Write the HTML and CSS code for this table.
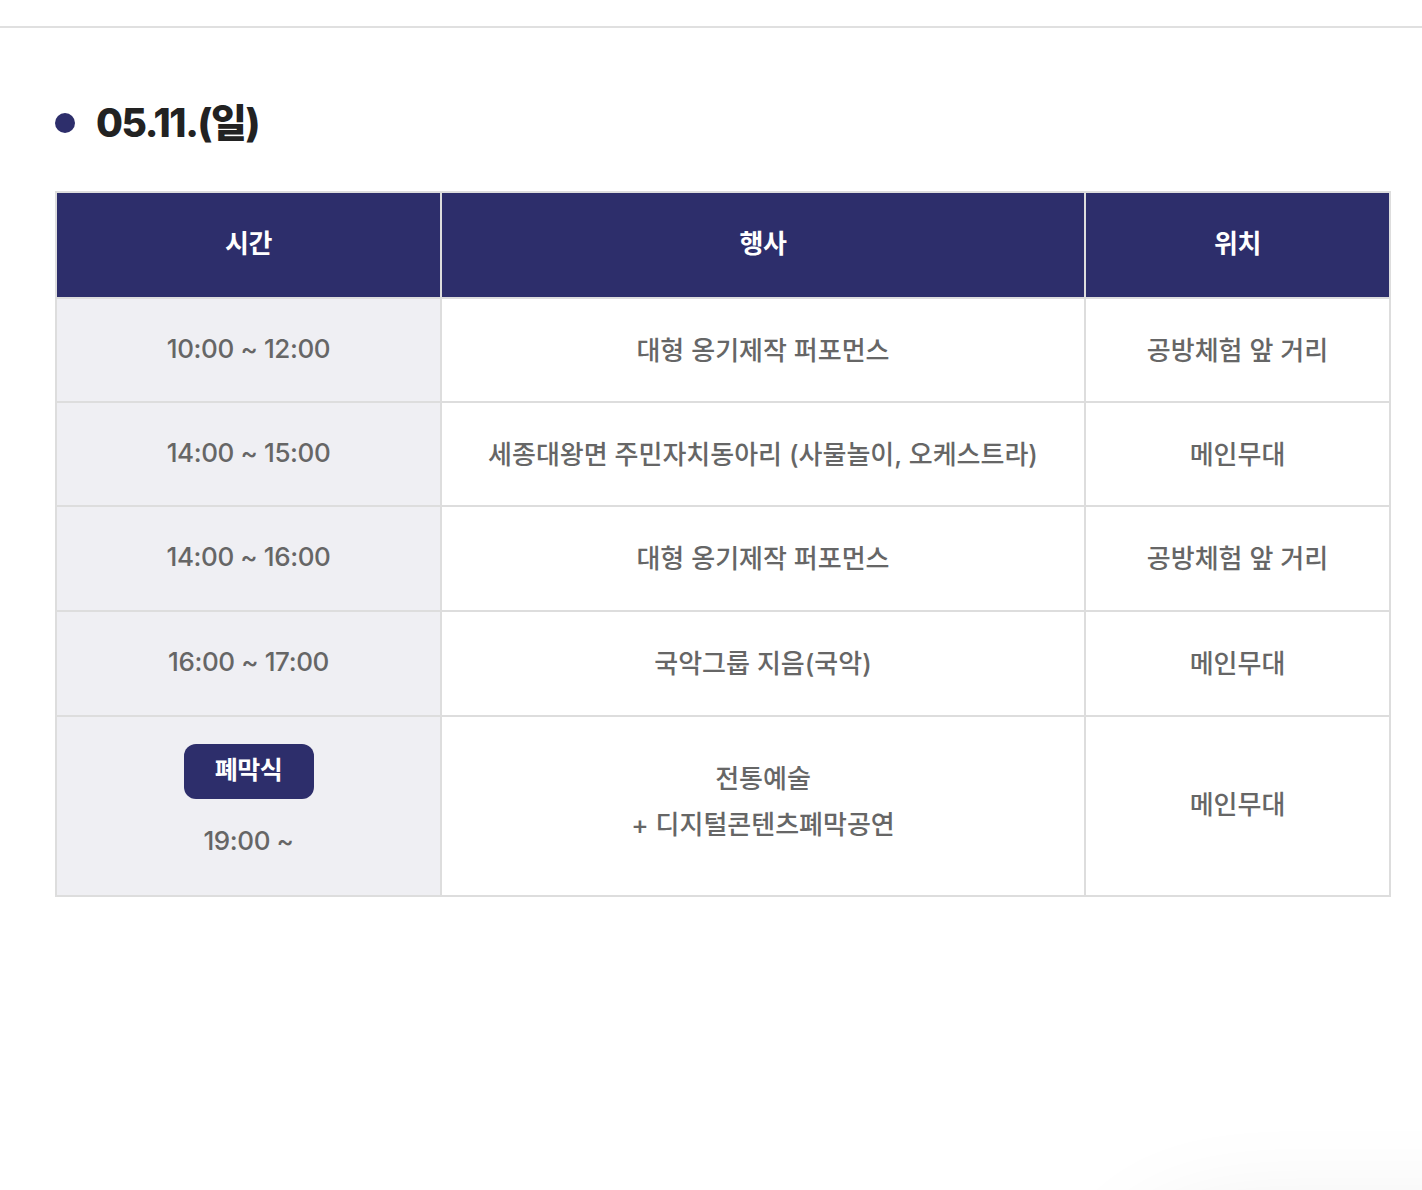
FILE: index.html
```html
<!DOCTYPE html>
<html lang="ko">
<head>
<meta charset="utf-8">
<title>05.11.(일)</title>
<link rel="stylesheet" href="styles.css">
</head>
<body>
<div class="topline"></div>
<main class="wrap">
  <h2 class="day"><span class="dot"></span><span class="daytext">05.11.(일)</span></h2>
  <table class="sched">
    <colgroup>
      <col class="c1"><col class="c2"><col class="c3">
    </colgroup>
    <thead>
      <tr><th>시간</th><th>행사</th><th>위치</th></tr>
    </thead>
    <tbody>
      <tr><td class="time">10:00 ~ 12:00</td><td>대형 옹기제작 퍼포먼스</td><td>공방체험 앞 거리</td></tr>
      <tr><td class="time">14:00 ~ 15:00</td><td>세종대왕면 주민자치동아리 (사물놀이, 오케스트라)</td><td>메인무대</td></tr>
      <tr class="tall"><td class="time">14:00 ~ 16:00</td><td>대형 옹기제작 퍼포먼스</td><td>공방체험 앞 거리</td></tr>
      <tr class="tall"><td class="time">16:00 ~ 17:00</td><td>국악그룹 지음(국악)</td><td>메인무대</td></tr>
      <tr class="last"><td class="time"><span class="badge">폐막식</span><span class="t">19:00 ~</span></td><td class="multi"><span class="line">전통예술</span><span class="line">+ 디지털콘텐츠폐막공연</span></td><td>메인무대</td></tr>
    </tbody>
  </table>
</main>
<div class="floatshadow"></div>
</body>
</html>
```

FILE: styles.css
```css
html, body {
  margin: 0;
  padding: 0;
  background: #fff;
  height: 100%;
  overflow: hidden;
}
body {
  font-family: "Inter", "Noto Sans CJK KR", sans-serif;
  color: #666;
}
.topline {
  height: 26px;
  border-bottom: 2px solid #e0e0e0;
}
.wrap {
  padding: 0 33px 0 55px;
}
.day {
  display: flex;
  align-items: center;
  margin: 72px 0 0;
  height: 46px;
  font-size: 39px;
  font-weight: 800;
  color: #222;
  letter-spacing: -1.4px;
}
.daytext {
  padding-bottom: 6px;
}
.dot {
  width: 20px;
  height: 20px;
  border-radius: 50%;
  background: #2d2e6b;
  margin-right: 21px;
}
.sched {
  margin-top: 45px;
  width: 1334px;
  border-collapse: collapse;
  table-layout: fixed;
  border: 2px solid #dddddd;
}
.c1 { width: 385px; }
.c2 { width: 644px; }
.c3 { width: 305px; }
.sched th {
  background: #2d2e6b;
  color: #fff;
  font-size: 26px;
  font-weight: 700;
  height: 96px;
  padding: 0 0 8px;
  border: 2px solid #dddddd;
  letter-spacing: -0.3px;
}
.sched td {
  height: 98px;
  padding: 0 0 4px;
  text-align: center;
  font-size: 26px;
  font-weight: 500;
  color: #666;
  border: 2px solid #dddddd;
  letter-spacing: 0;
}
.sched tr.tall td {
  height: 99px;
}
.sched td.time {
  background: #efeff3;
  letter-spacing: -0.4px;
}
.sched tr.last td {
  height: 170px;
  padding-bottom: 8px;
}
.sched tr.last td.time {
  height: 166px;
  padding-bottom: 12px;
}
.badge {
  display: block;
  width: 130px;
  height: 55px;
  margin: 0 auto 27px;
  border-radius: 12px;
  background: #2d2e6b;
  color: #fff;
  font-weight: 700;
  font-size: 25px;
  line-height: 53px;
  letter-spacing: -0.5px;
}
.t {
  display: block;
  line-height: 30px;
}
.line {
  display: block;
  line-height: 46px;
}
.floatshadow {
  position: fixed;
  left: 1120px;
  top: 1225px;
  width: 560px;
  height: 220px;
  border-radius: 110px;
  background: #fff;
  box-shadow: 0 0 110px rgba(0, 0, 0, 0.1);
}
```
